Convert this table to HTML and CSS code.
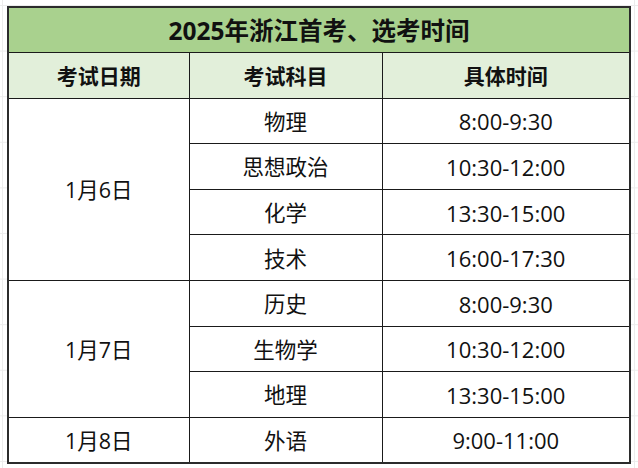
FILE: index.html
```html
<!DOCTYPE html>
<html lang="zh-CN">
<head>
<meta charset="utf-8">
<title>2025年浙江首考、选考时间</title>
<link rel="stylesheet" href="styles.css">
</head>
<body>
<div class="sheet">
<table class="schedule">
  <colgroup>
    <col class="c-date">
    <col class="c-subject">
    <col class="c-time">
  </colgroup>
  <thead>
    <tr class="title-row"><th colspan="3">2025年浙江首考、选考时间</th></tr>
    <tr class="head-row"><th>考试日期</th><th>考试科目</th><th>具体时间</th></tr>
  </thead>
  <tbody>
    <tr><td rowspan="4">1月6日</td><td>物理</td><td class="time">8:00-9:30</td></tr>
    <tr><td>思想政治</td><td class="time">10:30-12:00</td></tr>
    <tr><td>化学</td><td class="time">13:30-15:00</td></tr>
    <tr><td>技术</td><td class="time">16:00-17:30</td></tr>
    <tr><td rowspan="3">1月7日</td><td>历史</td><td class="time">8:00-9:30</td></tr>
    <tr><td>生物学</td><td class="time">10:30-12:00</td></tr>
    <tr><td>地理</td><td class="time">13:30-15:00</td></tr>
    <tr><td>1月8日</td><td>外语</td><td class="time">9:00-11:00</td></tr>
  </tbody>
</table>
</div>
</body>
</html>
```

FILE: styles.css
```css
html, body {
  margin: 0;
  padding: 0;
  background: #ffffff;
}

.sheet {
  width: 638px;
  height: 468px;
  box-sizing: border-box;
  padding: 6px 0 0 7px;
  background-color: #ffffff;
  background-image:
    linear-gradient(to bottom, #ececec 1px, transparent 1px),
    linear-gradient(to right, #ececec 1px, transparent 1px);
  background-size: 100% 45.6px, 632px 100%;
  background-position: 0 5px, 2px 0;
}

.schedule {
  width: 622px;
  border-collapse: collapse;
  table-layout: fixed;
  border: 2px solid #2b2b2b;
  font-family: "Open Sans", "Noto Sans CJK SC", sans-serif;
  color: #111111;
  background: #ffffff;
}

.c-date { width: 181px; }
.c-subject { width: 193px; }
.c-time { width: 248px; }

.schedule th,
.schedule td {
  height: 45.6px;
  padding: 0;
  box-sizing: border-box;
  border: 1px solid #1a1a1a;
  text-align: center;
  vertical-align: middle;
  line-height: 1;
}

.schedule td {
  font-size: 21.5px;
  font-weight: 400;
  padding-top: 1px;
}

.schedule td.time {
  font-size: 22px;
}

.title-row th {
  background: #a9d18e;
  font-size: 24.5px;
  font-weight: 700;
  padding-top: 2px;
}

.head-row th {
  background: #e2efda;
  font-size: 21px;
  font-weight: 700;
  padding-top: 2px;
}
```
